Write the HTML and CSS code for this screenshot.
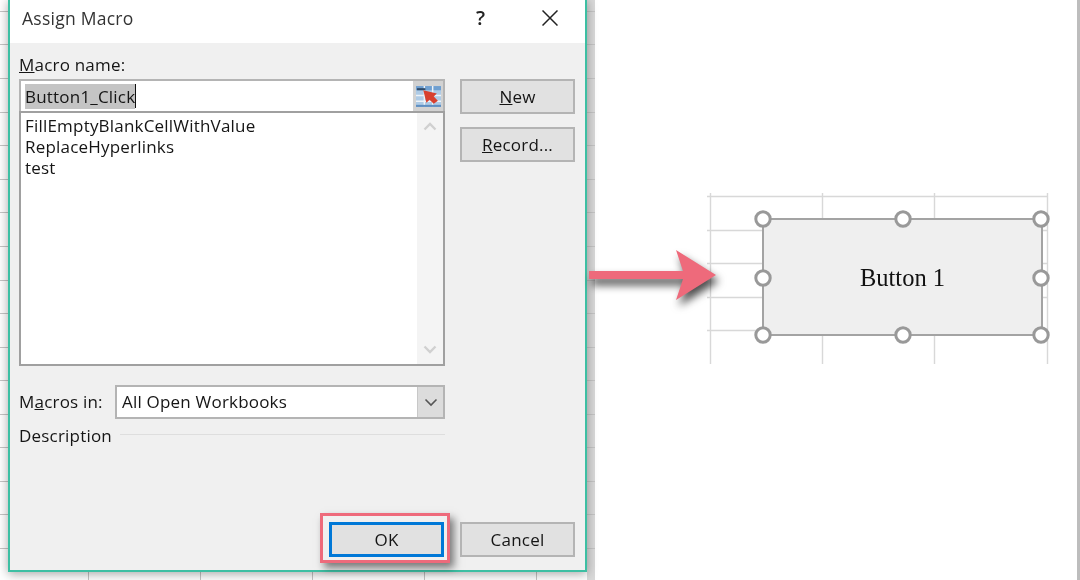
FILE: index.html
```html
<!DOCTYPE html>
<html lang="en">
<head>
<meta charset="utf-8">
<title>Assign Macro</title>
<link rel="stylesheet" href="styles.css">
</head>
<body>
<main class="canvas">
  <svg class="sheet" width="595" height="580" viewBox="0 0 595 580" aria-hidden="true">
    <rect x="587" y="0" width="8" height="580" fill="#d9d9d9"/>
    <g stroke="#c4c4c4" stroke-width="1">
      <path d="M0 11.5H595M0 44.5H595M0 78.5H595M0 112.5H595M0 145.5H595M0 179.5H595M0 212.5H595M0 246.5H595M0 280.5H595M0 313.5H595M0 347.5H595M0 380.5H595M0 414.5H595M0 447.5H595M0 481.5H595M0 514.5H595M0 548.5H595"/>
      <path d="M88.5 560V580M200.5 560V580M312.5 560V580M424.5 560V580M536.5 560V580"/>
    </g>
  </svg>

  <section class="dialog">
    <header class="titlebar">
      <span class="title">Assign Macro</span>
      <span class="help">?</span>
      <svg class="close" width="16" height="16" viewBox="0 0 16 16" aria-hidden="true"><path d="M0.5 0.5L15.5 15.5M15.5 0.5L0.5 15.5" stroke="#222" stroke-width="1.5" fill="none"/></svg>
    </header>
    <div class="body">
      <div class="main">
        <div class="left">
          <label class="label"><u>M</u>acro name:</label>
          <div class="namebox">
            <div class="nameinput"><span class="selected">Button1_Click</span><span class="caret"></span></div>
            <div class="refbtn">
              <svg width="25" height="21" viewBox="0 0 24 20" aria-hidden="true">
                <rect x="0" y="0" width="24" height="20" fill="#aecbe6"/>
                <rect x="0" y="0" width="24" height="4" fill="#6f9fd0"/>
                <path d="M0 9H24M0 14.5H24M8 0V20M16 0V20" stroke="#eef3f8" stroke-width="1.4"/>
                <path d="M1 3H9" stroke="#2f4a68" stroke-width="2"/>
                <path d="M0 19H24" stroke="#5f8fc2" stroke-width="2"/>
                <path d="M7 4L20 7L17 10L21 14L17 17L13 13L10 16Z" fill="#d8402f"/>
              </svg>
            </div>
          </div>
          <div class="listbox">
            <ul class="items">
              <li>FillEmptyBlankCellWithValue</li>
              <li>ReplaceHyperlinks</li>
              <li>test</li>
            </ul>
            <div class="scrollbar">
              <svg width="14" height="9" viewBox="0 0 14 9" aria-hidden="true"><path d="M1.5 7.5L7 2L12.5 7.5" stroke="#d0d0d0" stroke-width="2.4" fill="none"/></svg>
              <svg width="14" height="9" viewBox="0 0 14 9" aria-hidden="true"><path d="M1.5 1.5L7 7L12.5 1.5" stroke="#d0d0d0" stroke-width="2.4" fill="none"/></svg>
            </div>
          </div>
          <div class="macrosin">
            <label class="label">M<u>a</u>cros in:</label>
            <div class="select">
              <span class="selectvalue">All Open Workbooks</span>
              <span class="selectbtn">
                <svg width="14" height="9" viewBox="0 0 14 9" aria-hidden="true"><path d="M1.5 1.5L7 7L12.5 1.5" stroke="#555" stroke-width="1.6" fill="none"/></svg>
              </span>
            </div>
          </div>
          <div class="description">
            <span class="label">Description</span>
            <span class="rule"></span>
          </div>
        </div>
        <div class="right">
          <button class="btn"><u>N</u>ew</button>
          <button class="btn"><u>R</u>ecord...</button>
        </div>
      </div>
      <footer class="footer">
        <span class="highlight"><button class="btn btn-default">OK</button></span>
        <button class="btn">Cancel</button>
      </footer>
    </div>
  </section>

  <svg class="minigrid" width="345" height="172" viewBox="0 0 345 172" aria-hidden="true">
    <path d="M0 4.5H341M0 38.5H341M0 71.5H341M0 105.5H341M0 138.5H341M3.5 1V172M115.5 1V172M227.5 1V172M340.5 1V172" stroke="#d8d8d8" stroke-width="1.4" fill="none"/>
  </svg>

  <div class="formbutton">Button 1</div>
  <svg class="handles" width="300" height="136" viewBox="0 0 300 136" aria-hidden="true">
    <g fill="#fff" stroke="#999" stroke-width="3">
      <circle cx="10" cy="10" r="7.2"/><circle cx="150" cy="10" r="7.2"/><circle cx="288" cy="10" r="7.2"/>
      <circle cx="10" cy="69" r="7.2"/><circle cx="288" cy="69" r="7.2"/>
      <circle cx="10" cy="126" r="7.2"/><circle cx="150" cy="126" r="7.2"/><circle cx="288" cy="126" r="7.2"/>
    </g>
  </svg>

  <svg class="arrow" width="140" height="70" viewBox="0 0 140 70" aria-hidden="true">
    <path d="M4 21H98L91 0L131 25L91 50L98 29H4Z" fill="#ee6a7b"/>
  </svg>
  <div class="edgebar"></div>
</main>
</body>
</html>
```
FILE: styles.css
```css
* { box-sizing: border-box; }
html, body { margin: 0; padding: 0; background: #fff; }
.canvas {
  position: relative;
  width: 1080px;
  height: 580px;
  overflow: hidden;
  background: #fff;
  font-family: "Open Sans", "Noto Sans", sans-serif;
  color: #151515;
  font-size: 17px;
  letter-spacing: .2px;
  filter: blur(.45px);
}
.sheet { position: absolute; left: 0; top: 0; }
.dialog {
  position: absolute;
  left: 8px;
  top: -1px;
  width: 579px;
  height: 573px;
  border: 2px solid #3dbfa3;
  border-top: 0;
  background: #f0f0f0;
  box-shadow: 0 2px 10px rgba(0,0,0,.35);
  display: flex;
  flex-direction: column;
}
.titlebar {
  height: 44px;
  flex: none;
  background: #fff;
  display: flex;
  align-items: center;
  padding: 0 27px 7px 12px;
}
.title { font-size: 17.5px; letter-spacing: .25px; color: #333; flex: 1; }
.help { font-size: 20px; color: #222; margin-right: 57px; font-weight: 600; letter-spacing: 0; }
.body {
  flex: 1;
  display: flex;
  flex-direction: column;
  justify-content: space-between;
  padding: 10px 10px 13px 9px;
}
.main { display: flex; gap: 15px; }
.left { width: 426px; flex: none; }
.right { width: 115px; flex: none; display: flex; flex-direction: column; gap: 13px; padding-top: 26px; }
.label { line-height: 22px; white-space: nowrap; }
.namebox {
  margin-top: 3px;
  height: 34px;
  display: flex;
  border: 2px solid #b4b4b4;
  background: #fff;
}
.nameinput { flex: 1; display: flex; align-items: center; padding: 0 4px; }
.selected { background: #c4c4c4; line-height: 25px; }
.caret { width: 1px; height: 24px; background: #111; }
.refbtn {
  width: 30px;
  flex: none;
  background: #d2d2d2;
  display: flex;
  align-items: center;
  justify-content: center;
}
.listbox {
  margin-top: -2px;
  height: 255px;
  display: flex;
  border: 2px solid #a0a0a0;
  background: #fff;
}
.items { flex: 1; list-style: none; margin: 0; padding: 3px 4px; line-height: 20.8px; }
.scrollbar {
  width: 26px;
  flex: none;
  background: #f4f4f4;
  display: flex;
  flex-direction: column;
  justify-content: space-between;
  align-items: center;
  padding: 9px 0 10px;
}
.macrosin { display: flex; align-items: center; margin-top: 19px; height: 34px; }
.macrosin .label { width: 96px; flex: none; }
.select {
  flex: 1;
  height: 34px;
  display: flex;
  border: 2px solid #b4b4b4;
  background: #fff;
}
.selectvalue { flex: 1; padding-left: 5px; line-height: 30px; }
.selectbtn {
  width: 26px;
  background: #dcdcdc;
  border-left: 1px solid #c8c8c8;
  display: flex;
  align-items: center;
  justify-content: center;
}
.description { display: flex; align-items: center; gap: 8px; margin-top: 6px; }
.rule { flex: 1; height: 1.5px; background: #dedede; margin-top: -3px; }
.btn {
  display: block;
  width: 115px;
  height: 35px;
  padding: 0;
  border: 2px solid #b4b4b4;
  background: #e1e1e1;
  font: inherit;
  letter-spacing: inherit;
  color: inherit;
  text-align: center;
}
.footer { display: flex; justify-content: flex-end; align-items: center; gap: 10px; }
.highlight {
  display: block;
  padding: 6px 3px 3px 6px;
  margin: -9px 0 -6px;
  border: 3px solid #ee6a7b;
  box-shadow: 4px 5px 8px rgba(0,0,0,.5);
}
.btn-default { border-color: #0078d7; border-width: 3px; }
.minigrid { position: absolute; left: 707px; top: 192px; }
.formbutton {
  position: absolute;
  left: 762px;
  top: 218px;
  width: 281px;
  height: 118px;
  padding-top: 2px;
  border: 2.5px solid #a3a3a3;
  background: #efefef;
  font-family: "Liberation Serif", serif;
  font-size: 24.5px;
  letter-spacing: 0;
  color: #111;
  display: flex;
  align-items: center;
  justify-content: center;
}
.handles { position: absolute; left: 753px; top: 209px; }
.arrow {
  position: absolute;
  left: 585px;
  top: 250px;
  filter: drop-shadow(3px 6px 4px rgba(0,0,0,.7));
}
.edgebar { position: absolute; right: 0; top: 0; bottom: 0; width: 3px; background: #bdbdbd; }
```
